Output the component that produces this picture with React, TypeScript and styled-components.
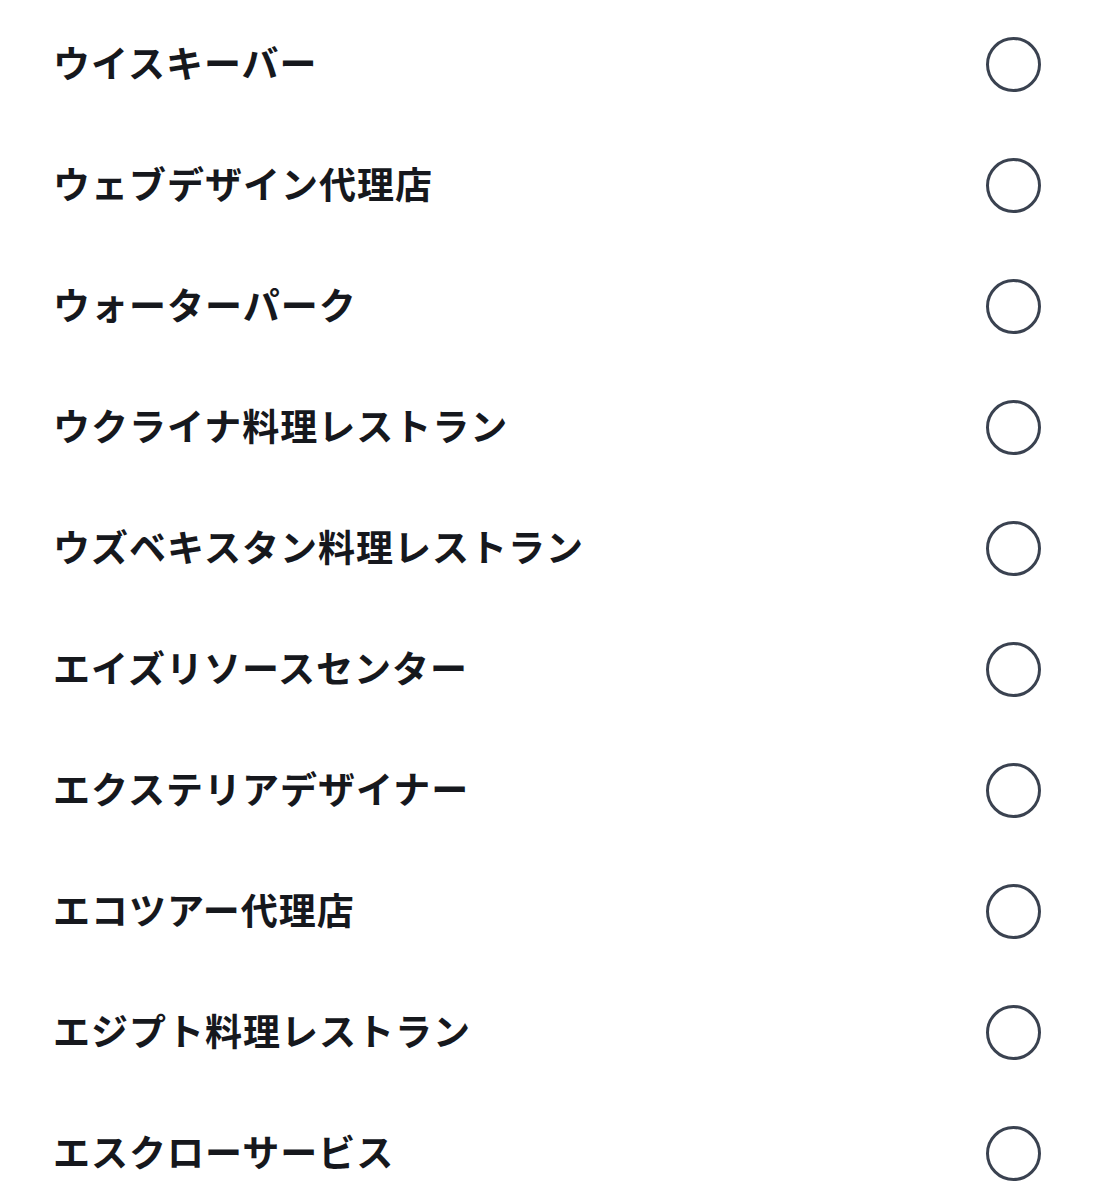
import styled, {createGlobalStyle} from "styled-components";

const items = [
    "ウイスキーバー",
    "ウェブデザイン代理店",
    "ウォーターパーク",
    "ウクライナ料理レストラン",
    "ウズベキスタン料理レストラン",
    "エイズリソースセンター",
    "エクステリアデザイナー",
    "エコツアー代理店",
    "エジプト料理レストラン",
    "エスクローサービス",
];

const GlobalStyle = createGlobalStyle`
    body {
        margin: 0;
        background: #FFF;
        font-family: "Noto Sans CJK JP", "Noto Sans", sans-serif;
    }
`;

const App = () => {
    return (
        <>
            <GlobalStyle/>
            <List>
                {items.map((name) => (
                    <Row key={name}>
                        <Label>{name}</Label>
                        <Radio type="button" aria-label={name}/>
                    </Row>
                ))}
            </List>
        </>
    );
}

const List = styled.div`
    display: flex;
    flex-direction: column;
    padding: 4px 54px 0 53px;
`;

const Row = styled.div`
    display: flex;
    align-items: center;
    justify-content: space-between;
    height: 121px;
`;

const Label = styled.div`
    color: #16181d;
    font-size: 37px;
    font-weight: 700;
    letter-spacing: 1px;
    padding-bottom: 5px;
`;

const Radio = styled.button`
    width: 55px;
    height: 55px;
    border-radius: 50%;
    border: 3.5px solid #3a4250;
    background: transparent;
    padding: 0;
    box-sizing: border-box;
`;

export default App;
